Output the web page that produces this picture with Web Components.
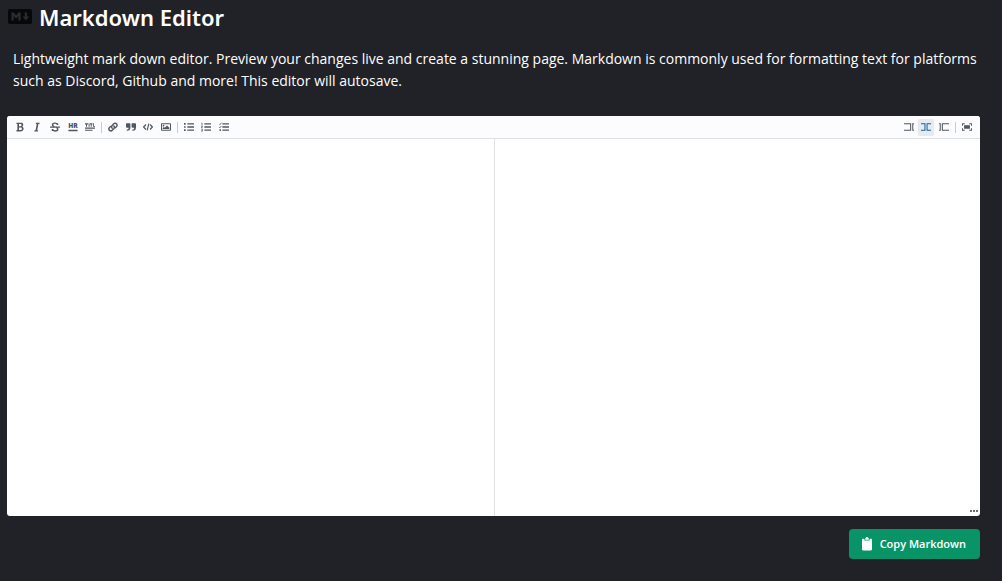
<!DOCTYPE html>
<html lang="en">
<head>
<meta charset="utf-8">
<meta name="viewport" content="width=device-width, initial-scale=1">
<title>Markdown Editor</title>
<style>
  html, body { margin: 0; min-height: 100%; background: #212228; }
  body { font-family: "Open Sans", "Noto Sans", sans-serif; color: #fff; }
</style>
</head>
<body>
<markdown-page></markdown-page>

<script>
const svg = (box, body) => `<svg viewBox="${box}" fill="currentColor" aria-hidden="true">${body}</svg>`;

const list = (marks) => svg('0 0 12 12', `<path d="M4 1.500h8v1.600H4zM4 5.200h8v1.600H4zM4 8.900h8v1.600H4z"/>${marks}`);

const ICONS = {
  bold: svg('-64 0 512 512', '<path d="M304.793 243.891c33.639-18.537 53.657-54.16 53.657-95.693 0-48.236-26.25-87.626-68.626-104.179C265.138 34.01 240.849 32 209.661 32H24c-8.837 0-16 7.163-16 16v33.113c0 8.837 7.163 16 16 16h33.113v318.53H24c-8.837 0-16 7.163-16 16V464c0 8.837 7.163 16 16 16h195.69c24.203 0 44.834-1.289 66.866-7.584C337.52 457.193 376 410.647 376 350.014c0-52.168-26.573-91.684-71.207-106.123zM142.217 100.809h67.444c16.294 0 27.536 2.019 37.525 6.717 15.828 8.479 24.906 26.502 24.906 49.446 0 35.029-20.32 56.79-53.029 56.79h-76.846V100.809zm112.642 305.475c-10.14 4.056-22.677 4.907-31.409 4.907h-81.233V281.943h84.367c39.645 0 63.057 25.38 63.057 63.057.001 28.425-13.66 52.483-34.782 61.284z"/>'),
  italic: svg('-96 0 512 512', '<path d="M204.758 416h-33.849l62.092-320h40.725a16 16 0 0 0 15.704-12.937l6.242-32C297.599 41.184 290.034 32 279.968 32H120.235a16 16 0 0 0-15.704 12.937l-6.242 32C96.362 86.816 103.927 96 113.993 96h33.846l-62.09 320H46.278a16 16 0 0 0-15.704 12.935l-6.245 32C22.402 470.815 29.965 480 40.034 480h158.479a16 16 0 0 0 15.704-12.935l6.245-32c1.927-9.88-5.638-19.065-15.704-19.065z"/>'),
  strike: svg('0 0 12 12', '<path d="M0 5.300h12v1.500H0z"/><path fill="none" stroke="currentColor" stroke-width="1.700" d="M9 3.700V1.600M9 3.200C8.500 2 7.300 1.300 6 1.300 4.300 1.300 3 2.200 3 3.600c0 1 .8 1.700 2.200 2.100M7.500 6.400c1.200.4 1.800 1 1.800 2 0 1.400-1.400 2.300-3.200 2.300-1.500 0-2.700-.7-3.200-1.900M2.900 8.300v2.400"/>'),
  hr: svg('0 0 12 12', '<text x="6" y="7.400" text-anchor="middle" font-family="Open Sans, sans-serif" font-weight="800" font-size="8">HR</text><path d="M.5 9.400h11v1.600H.5z"/>'),
  title: svg('0 0 12 12', '<path d="M0 1.600h3.600v1.300H2.400v2.900H1.200V2.900H0zM4.300 1.600h1.200v4.200H4.300zM6 1.600h3v1.300H8v2.900H6.900V2.900H6zM9.700 1.600h1v3.200H12v1H9.700zM0 6.700h12V8H0zM0 9.200h9v1.400H0z"/>'),
  link: svg('0 0 12 12', '<g fill="none" stroke="currentColor" stroke-width="1.700" stroke-linecap="round"><path d="M5 7.400a2.300 2.300 0 0 1 0-3.300l1.900-1.900a2.300 2.300 0 0 1 3.300 3.300l-1.300 1.300"/><path d="M7 4.700A2.300 2.300 0 0 1 7 8L5.100 9.900a2.300 2.300 0 0 1-3.300-3.300l1.300-1.300"/></g>'),
  quote: svg('0 0 12 12', '<path d="M.5 1.500h4c.5 0 .8.3.8.8v4.400c0 2.400-1.300 3.900-3.700 3.900H1V9c1.500 0 2.200-.7 2.200-2.200H.8L0 6V2.200zM7.200 1.500h4c.5 0 .8.3.8.8v4.400c0 2.400-1.300 3.900-3.700 3.900h-.6V9c1.500 0 2.200-.7 2.200-2.200H7.500L6.700 6V2.200z"/>'),
  code: svg('0 0 12 12', '<path fill="none" stroke="currentColor" stroke-width="1.400" d="M3.500 3 .8 6l2.700 3M8.500 3l2.700 3-2.700 3M7 2 5 10"/>'),
  image: svg('0 0 12 12', '<path fill-rule="evenodd" d="M.9 1.600h10.200c.5 0 .9.4.9.9v7c0 .5-.4.9-.9.9H.9C.4 10.400 0 10 0 9.500v-7c0-.5.4-.9.9-.9zM1.200 2.800v6.400h9.600V2.800zM3 3.400a1 1 0 1 0 0 2.100 1 1 0 0 0 0-2.100zM2 8.500V7.300l1.500-1.200 1 .9 2.700-2.700L10 7v1.500z"/>'),
  ul: list('<path d="M0 1.300h2v2H0zM0 5h2v2H0zM0 8.700h2v2H0z"/>'),
  ol: list('<path d="M.4 1h1.300v2.800H.8V1.700H.4zM.2 4.600H2v1.300L1.100 6.800H2v.7H.2v-.8L1.200 5.400h-1zM.2 8.300H2v3H.2v-.7h1v-.5H.6v-.6h.6v-.5h-1z"/>'),
  check: list('<path fill="none" stroke="currentColor" stroke-width="1" d="m.2 2.300.9.9L2.900 1M.2 6l.9.9 1.800-2.200"/><path d="M.6 8.700h1.800v2H.6z"/>'),
  edit: svg('0 0 520 520', '<path d="M0 71v51h319v275H0v53h372V71zM429 71h91v51h-39v275h39v53h-91z"/>'),
  live: svg('0 0 520 520', '<path d="M0 71v51h179v275H0v53h232V71zM289 71h231v51H342v275h178v53H289z"/>'),
  preview: svg('0 0 520 520', '<path d="M520 71v51H201v275h319v53H148V71zM91 71H0v51h39v275H0v53h91z"/>'),
  full: svg('0 0 12 12', '<path d="M0 1.500h3.300v1.200H1.200v1.800H0zM8.700 1.500H12v3h-1.200V2.700H8.700zM0 7.500h1.200v1.800h2.100v1.200H0zM10.800 7.500H12v3H8.700V9.300h2.100zM2.500 3.800h7v4.400h-7z"/>'),
};

class ToolButton extends HTMLElement {
  connectedCallback() {
    const name = this.getAttribute('icon');
    const label = this.getAttribute('label');
    this.attachShadow({ mode: 'open' }).innerHTML = `
      <style>
        :host { display: flex; justify-content: center; }
        button { width: 16px; height: 17px; padding: 0; border: 0; border-radius: 2px; background: none;
          color: #50575f; display: flex; align-items: center; justify-content: center; cursor: pointer; }
        button:hover, :host([active]) button { background: #e7ebf0; color: #17609f; }
        svg { width: 10px; height: 10px; flex: none; }
      </style>
      <button type="button" aria-label="${label}" title="${label}">${ICONS[name]}</button>`;
  }
}
customElements.define('tool-button', ToolButton);

class ToolGroup extends HTMLElement {
  connectedCallback() {
    this.attachShadow({ mode: 'open' }).innerHTML = `
      <style>
        :host { display: grid; grid-auto-flow: column; grid-auto-columns: 1fr; }
      </style>
      <slot></slot>`;
  }
}
customElements.define('tool-group', ToolGroup);

class EditorToolbar extends HTMLElement {
  connectedCallback() {
    const b = (icon, label, extra = '') => `<tool-button icon="${icon}" label="${label}" ${extra}></tool-button>`;
    this.attachShadow({ mode: 'open' }).innerHTML = `
      <style>
        :host { display: flex; align-items: center; justify-content: space-between; height: 22px;
          padding: 0 4px; background: #fcfbfd; border-bottom: 1px solid #dcdfe3; }
        .side { display: flex; align-items: center; }
        .five { width: 88px; } .four { width: 71px; } .three { width: 53px; } .one { width: 18px; }
        i { width: 1px; height: 11px; margin: 0 2px; background: #c8ccd1; }
      </style>
      <div class="side">
        <tool-group class="five">${b('bold', 'Bold')}${b('italic', 'Italic')}${b('strike', 'Strikethrough')}${b('hr', 'Horizontal rule')}${b('title', 'Title')}</tool-group>
        <i></i>
        <tool-group class="four">${b('link', 'Link')}${b('quote', 'Quote')}${b('code', 'Code')}${b('image', 'Image')}</tool-group>
        <i></i>
        <tool-group class="three">${b('ul', 'Unordered list')}${b('ol', 'Ordered list')}${b('check', 'Checklist')}</tool-group>
      </div>
      <div class="side">
        <tool-group class="three">${b('edit', 'Edit')}${b('live', 'Live', 'active')}${b('preview', 'Preview')}</tool-group>
        <i></i>
        <tool-group class="one">${b('full', 'Fullscreen')}</tool-group>
      </div>`;
  }
}
customElements.define('editor-toolbar', EditorToolbar);

class MarkdownEditor extends HTMLElement {
  connectedCallback() {
    this.attachShadow({ mode: 'open' }).innerHTML = `
      <style>
        :host { display: block; position: relative; background: #fff; border-radius: 3px; overflow: hidden; color: #24292f; }
        .panes { display: grid; grid-template-columns: 1fr 1fr; min-height: 377px; }
        textarea { border: 0; outline: 0; resize: none; padding: 10px; background: none; font: 13px/18px "Liberation Mono", monospace; }
        .preview { border-left: 1px solid #dfe1e4; padding: 10px; }
        .grip { position: absolute; right: 2px; bottom: 4px; width: 8px; height: 2px; fill: #6a6e74; }
      </style>
      <editor-toolbar></editor-toolbar>
      <div class="panes">
        <textarea aria-label="Markdown source"></textarea>
        <div class="preview"></div>
      </div>
      <svg class="grip" viewBox="0 0 8 2" aria-hidden="true"><path d="M0 0h2v2H0zM3 0h2v2H3zM6 0h2v2H6z"/></svg>`;
  }
}
customElements.define('markdown-editor', MarkdownEditor);

class CopyButton extends HTMLElement {
  connectedCallback() {
    this.attachShadow({ mode: 'open' }).innerHTML = `
      <style>
        :host { display: block; }
        button { display: flex; align-items: center; gap: 7px; height: 30px; padding: 0 14px 0 12px; border: 0; border-radius: 4px;
          background: #099468; color: #fff; font: 600 11px/16px "Open Sans", sans-serif; cursor: pointer; }
        svg { width: 12px; height: 14px; }
      </style>
      <button type="button">
        <svg viewBox="0 0 12 14" fill="#fff" aria-hidden="true"><path d="M2.200 1.700h1.200v1.800h5.200V1.700h1.200c.7 0 1.200.5 1.200 1.200v9.400c0 .7-.5 1.200-1.200 1.200H2.200c-.7 0-1.200-.5-1.200-1.200V2.900c0-.7.5-1.200 1.200-1.200z"/><path d="M4.200 1.300h.6a1.200 1.200 0 0 1 2.400 0h.6v1.500H4.200z"/></svg>
        <slot></slot>
      </button>`;
  }
}
customElements.define('copy-button', CopyButton);

class MarkdownPage extends HTMLElement {
  connectedCallback() {
    this.attachShadow({ mode: 'open' }).innerHTML = `
      <style>
        :host { display: block; padding: 2px 22px 22px 7px; }
        header { display: flex; align-items: center; gap: 7px; padding-left: 1px; }
        header svg { width: 24px; height: 15px; margin-bottom: 2px; }
        h1 { margin: 0; font: 600 22px/30px "Noto Sans", sans-serif; }
        p { margin: 16px 0 24px 6px; font-size: 14px; line-height: 22px; }
        footer { display: flex; justify-content: flex-end; padding-top: 13px; }
      </style>
      <header>
        <svg viewBox="0 0 208 128" aria-hidden="true"><rect width="208" height="128" rx="15" fill="#08080a"/><path fill="#2b2c31" d="M30 98V30h20l20 25 20-25h20v68H90V59L70 84 50 59v39zM155 98l-30-33h20V30h20v35h20z"/></svg>
        <h1>Markdown Editor</h1>
      </header>
      <p>Lightweight mark down editor. Preview your changes live and create a stunning page. Markdown is commonly used for formatting text for platforms such as Discord, Github and more! This editor will autosave.</p>
      <markdown-editor></markdown-editor>
      <footer><copy-button>Copy Markdown</copy-button></footer>`;
  }
}
customElements.define('markdown-page', MarkdownPage);
</script>
</body>
</html>
